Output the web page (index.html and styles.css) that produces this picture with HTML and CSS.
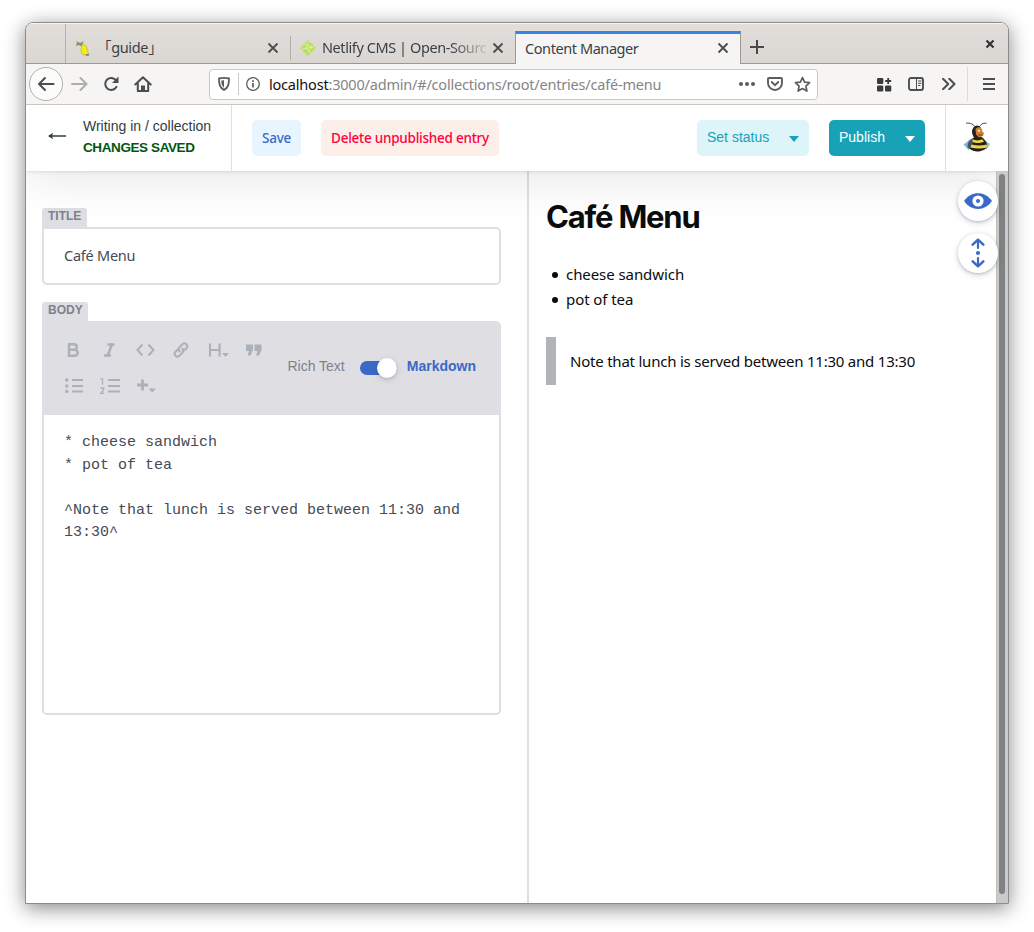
FILE: index.html
```html
<!DOCTYPE html>
<html lang="en">
<head>
<meta charset="utf-8">
<title>Content Manager</title>
<link rel="stylesheet" href="styles.css">
</head>
<body>
<div class="window">
  <header class="tabstrip">
    <div class="tab-lead"></div>
    <div class="tab tab-guide">
      <svg class="favicon" width="16" height="18" viewBox="0 0 16 18"><path d="M1 2l4 2 4-2-2 4 1 2-4-2-3 1 1-3z" fill="#7b9467"/><path d="M7 6c3-1 5 1 5 4 0 2 1 3 2 5l-1 1c-4 1-7-1-7-5 0-2 1-3 1-5z" fill="#f4ee08" stroke="#b9b332" stroke-width=".7"/><path d="M11 15h3v1.500h-3z" fill="#777"/></svg>
      <span class="tab-title guide-title"><span class="bracket-open">「</span>guide<span class="bracket-close">」</span></span>
      <svg class="close" width="12" height="12" viewBox="0 0 12 12"><path d="M1.500 1.500l9 9M10.500 1.500l-9 9"/></svg>
    </div>
    <div class="tab tab-netlify">
      <svg class="favicon" width="16" height="16" viewBox="0 0 16 16"><path d="M8 0l8 8-8 8-8-8z" fill="#b9e05a"/><path d="M4 4l8 3-5 6M2 9l12-2M9 1L6 8l5 5" fill="none" stroke="#e0f2b4" stroke-width=".8"/></svg>
      <span class="tab-title fade">Netlify CMS | Open-Sourc</span>
      <svg class="close" width="12" height="12" viewBox="0 0 12 12"><path d="M1.500 1.500l9 9M10.500 1.500l-9 9"/></svg>
    </div>
    <div class="tab tab-active">
      <span class="tab-title">Content Manager</span>
      <svg class="close" width="12" height="12" viewBox="0 0 12 12"><path d="M1.500 1.500l9 9M10.500 1.500l-9 9"/></svg>
    </div>
    <svg class="new-tab" width="14" height="14" viewBox="0 0 14 14"><path d="M7 0v14M0 7h14" stroke="#474a4c" stroke-width="2"/></svg>
    <svg class="window-close" width="10" height="10" viewBox="0 0 10 10"><path d="M1.500 1.500l7 7M8.500 1.500l-7 7" stroke="#2e3436" stroke-width="2.200"/></svg>
  </header>

  <nav class="navbar">
    <span class="back"><svg width="18" height="16" viewBox="0 0 18 16"><path d="M16.500 8H2.500M8 2L2 8l6 6" class="ln"/></svg></span>
    <svg class="forward" width="18" height="16" viewBox="0 0 18 16"><path d="M1 8h14M9.500 2l6 6-6 6" class="ln"/></svg>
    <svg class="reload" width="16" height="16" viewBox="0 0 16 16"><path d="M13.200 4.600A6 6 0 1 0 13.500 10.800" class="ln"/><path d="M15.500 .5v6.500H9z" fill="#4b4e50"/></svg>
    <svg class="home" width="18" height="16" viewBox="0 0 18 16"><path d="M1.300 8.500L9 1.200l7.700 7.300M3.800 7v8h10.400V7" class="ln"/><path d="M7 15v-5.500h4V15z" fill="#4b4e50"/></svg>
    <div class="urlbar">
      <svg class="shield" width="12" height="14" viewBox="0 0 12 14"><path d="M1 1.500c3-.7 7-.7 10 0 0 6-.8 9-5 11.500C1.800 10.500 1 7.500 1 1.500z" fill="none" stroke="#5c5c5c" stroke-width="1.800"/><path d="M6 3.200v7.500C3.500 8.500 3.300 6.500 3.300 3.500z" fill="#5c5c5c"/></svg>
      <span class="url-sep"></span>
      <svg class="info" width="14" height="14" viewBox="0 0 14 14"><circle cx="7" cy="7" r="6.300" fill="none" stroke="#5c5c5c" stroke-width="1.300"/><path d="M7 6v4.500M7 3.200V5" stroke="#5c5c5c" stroke-width="1.700"/></svg>
      <span class="url"><b>localhost</b>:3000/admin/#/collections/root/entries/café-menu</span>
      <svg class="dots" width="16" height="4" viewBox="0 0 16 4"><circle cx="2" cy="2" r="2"/><circle cx="8" cy="2" r="2"/><circle cx="14" cy="2" r="2"/></svg>
      <svg class="pocket" width="16" height="14" viewBox="0 0 16 14"><path d="M2 1h12q1 0 1 1v4a7 7 0 0 1-14 0V2q0-1 1-1z" fill="none" stroke="#5c5c5c" stroke-width="1.900"/><path d="M4.700 5L8 8.200 11.300 5" fill="none" stroke="#5c5c5c" stroke-width="1.900" stroke-linecap="round"/></svg>
      <svg class="star" width="17" height="17" viewBox="0 0 17 17"><path d="M8.500 1.500l2.100 4.600 5 .6-3.700 3.400 1 5-4.400-2.500-4.400 2.500 1-5L1.400 6.700l5-.6z" fill="none" stroke="#5c5c5c" stroke-width="1.700" stroke-linejoin="round"/></svg>
    </div>
    <svg class="grid-icon" width="15" height="15" viewBox="0 0 15 15"><rect y="1" width="6.300" height="6" rx="1.200"/><rect y="8.500" width="6.300" height="6" rx="1.200"/><rect x="8" y="8.500" width="6.300" height="6" rx="1.200"/><path d="M11.200 1v6M8.200 4h6" stroke="#3b3b3b" stroke-width="1.800"/></svg>
    <svg class="reader" width="16" height="14" viewBox="0 0 16 14"><rect x="1" y="1" width="14" height="12" rx="2" fill="none" stroke="#4b4e50" stroke-width="1.900"/><path d="M8.500 1v12" stroke="#4b4e50"/><path d="M10 4h3.500M10 6.300h3.500M10 8.500h2.500" stroke="#4b4e50"/></svg>
    <svg class="overflow" width="14" height="12" viewBox="0 0 14 12"><path d="M1 .7L6.200 6 1 11.300M7.300 .7L12.500 6l-5.200 5.300" class="ln"/></svg>
    <span class="nav-sep"></span>
    <svg class="menu" width="12" height="12" viewBox="0 0 12 12"><path d="M0 1h12M0 6h12M0 11h12" stroke="#4b4e50" stroke-width="1.800"/></svg>
  </nav>

  <div class="appbar">
    <a class="crumb">
      <svg width="18" height="8" viewBox="0 0 18 8"><path d="M18 4H2" stroke="#313d3e" stroke-width="1.400"/><path d="M0 4l5-3.200L4 4l1 3.200z" fill="#313d3e"/></svg>
      <span class="crumb-text"><span class="crumb-title">Writing in / collection</span><span class="saved">CHANGES SAVED</span></span>
    </a>
    <button class="btn save">Save</button>
    <button class="btn delete">Delete unpublished entry</button>
    <button class="btn status"><span>Set status</span><i class="caret"></i></button>
    <button class="btn publish"><span>Publish</span><i class="caret"></i></button>
    <div class="avatar">
      <svg width="28" height="32" viewBox="0 0 28 32">
        <path d="M3 2.200c4.500-.7 8 1.300 9.300 4.300M23.500 2.200c-4-.5-6 1.300-7.500 4.300" fill="none" stroke="#4a483f" stroke-width="1"/>
        <path d="M7 18.500L.5 23.500l5 5.500 4-4zM22 19.500l5 3.500-4 6z" fill="#86b9c6"/>
        <path d="M10 17c3-2 7-2 10 0 3 3 4.500 6 4 9-3 5-13 6-17 2-2-4-1-8 3-11z" fill="#22211f"/>
        <path d="M4.500 26c0-4 2-7.500 5-8.500L10 22l-3.500 6z" fill="#475064"/>
        <path d="M9.500 18.300q5 2.200 9.800 0l1.700 2.400q-6 2.300-11.500.3zM8.500 23.500q8 2 15.300 0l.2 3q-8 2.200-16.500 0z" fill="#efd73b"/>
        <ellipse cx="14" cy="11" rx="5" ry="6.500" fill="#24221f"/>
        <path d="M12.500 8c2-2.500 5-2 6 0l.5 2 2 2-1 3-4 1.500-3-3z" fill="#c88335"/><circle cx="16" cy="9.700" r="1.200" fill="#e8d9b5"/><path d="M15.500 14h4" stroke="#704315"/>
      </svg>
    </div>
  </div>

  <main class="workspace">
    <section class="editor">
      <label class="field-label">TITLE</label>
      <div class="title-input">Café Menu</div>
      <label class="field-label body-label">BODY</label>
      <div class="markdown-field">
        <div class="md-toolbar">
          <div class="md-tools">
            <svg viewBox="0 0 22 20"><path d="M6 4.200h5a2.800 2.800 0 0 1 0 5.600H6zM6 9.800h5.700a3 3 0 0 1 0 6H6z" fill="none" stroke="#abb0b9" stroke-width="2.400"/></svg>
            <svg viewBox="0 0 22 20"><path d="M8.500 4.500h7M5 15.500h7M12.800 4.500l-4 11" fill="none" stroke="#abb0b9" stroke-width="2.500"/></svg>
            <svg viewBox="0 0 22 20"><path d="M7.500 4.500L2.500 10l5 5.500M13.500 4.500l5 5.500-5 5.500" fill="none" stroke="#abb0b9" stroke-width="2"/></svg>
            <svg viewBox="0 0 22 20"><path d="M8.700 11.500c-2-2-1-3.600 0-4.600L11.700 4c2.500-2 6 1.300 4 4l-2 2M11.200 8.500c2 2 1 3.600 0 4.600L8.200 16c-2.500 2-6-1.300-4-4l2-2" fill="none" stroke="#abb0b9" stroke-width="2" stroke-linecap="round"/></svg>
            <svg viewBox="0 0 22 20"><path d="M3 3.500v13M12.600 3.500v13M3 10h10" fill="none" stroke="#abb0b9" stroke-width="2.100"/><path d="M15 13h7l-3.500 4z" fill="#abb0b9"/></svg>
            <svg viewBox="0 0 22 20"><path d="M3 4.500h7v5.500L7.500 15.500H4.500L6 11H3zM11.500 4.500h7v5.500L16 15.500H13L14.500 11h-3z" fill="#abb0b9"/></svg>
            <svg viewBox="0 0 22 20"><path d="M9 4h11M9 10h11M9 15.500h11" stroke="#abb0b9" stroke-width="2"/><circle cx="3.800" cy="4" r="1.700" fill="#abb0b9"/><circle cx="3.800" cy="10" r="1.700" fill="#abb0b9"/><circle cx="3.800" cy="15.500" r="1.700" fill="#abb0b9"/></svg>
            <svg viewBox="0 0 22 20"><path d="M9 4h12M9 10h12M9 15.500h12" stroke="#abb0b9" stroke-width="2"/><path d="M1.500 2.700h2V8.500M1.500 12h3.200v1.700L1.800 17.300h3.400" fill="none" stroke="#abb0b9" stroke-width="1.300"/></svg>
            <svg viewBox="0 0 22 20"><path d="M7.500 3.500v11M2 9h11" stroke="#abb0b9" stroke-width="2.800"/><path d="M13.500 12.500h7.500l-3.700 4z" fill="#abb0b9"/></svg>
          </div>
          <div class="mode">
            <span class="mode-rich">Rich Text</span>
            <span class="toggle"><span class="knob"></span></span>
            <span class="mode-md">Markdown</span>
          </div>
        </div>
        <pre class="md-source">* cheese sandwich
* pot of tea

^Note that lunch is served between 11:30 and
13:30^</pre>
      </div>
    </section>
    <section class="preview">
      <h1>Café Menu</h1>
      <ul>
        <li><span>cheese sandwich</span></li>
        <li><span>pot of tea</span></li>
      </ul>
      <blockquote>Note that lunch is served between 11:30 and 13:30</blockquote>
    </section>
    <div class="scrollbar"><div class="thumb"></div></div>
    <div class="floaters">
      <span class="round"><svg width="28" height="18" viewBox="0 0 28 18"><path d="M0 9C7-1.500 21-1.500 28 9 21 19.500 7 19.500 0 9z" fill="#3a69c7"/><circle cx="14" cy="9" r="5.600" fill="#fff"/><circle cx="14" cy="9" r="2" fill="#3a69c7"/></svg></span>
      <span class="round"><svg width="14" height="30" viewBox="0 0 14 30"><path d="M7 10.700V2.500M7 19.300v8.200" stroke="#3a69c7" stroke-width="2.200"/><path d="M1.700 6.700L7 1.700l5.300 5M1.700 23.300L7 28.300l5.300-5" fill="none" stroke="#3a69c7" stroke-width="2.500" stroke-linecap="round" stroke-linejoin="round"/><circle cx="7" cy="15" r="2.100" fill="#3a69c7"/></svg></span>
    </div>
  </main>
</div>
</body>
</html>
```
FILE: styles.css
```css
* { box-sizing: border-box; }
body {
  margin: 0;
  padding: 22px 0 0 25px;
  height: 932px;
  background: #fff;
  overflow: hidden;
  font-family: "Noto Sans", "Noto Sans CJK JP", sans-serif;
}
svg { display: block; flex: none; }
.window {
  width: 984px;
  height: 882px;
  border: 1px solid #8b8b88;
  border-radius: 8px 8px 0 0;
  overflow: hidden;
  box-shadow: 0 4px 20px rgba(0, 0, 0, .48);
  display: flex;
  flex-direction: column;
}

/* Tabs */
.tabstrip {
  height: 41px;
  flex: none;
  display: flex;
  position: relative;
  z-index: 2;
  background: linear-gradient(#e1dedb, #dad6d2);
  border-bottom: 1px solid #9a9996;
  border-top: 1px solid #f6f5f4;
  color: #3a4144;
  font-size: 14.500px;
}
.tab-lead { width: 40px; border-right: 1px solid #b5b2ae; }
.tab { display: flex; align-items: center; padding-top: 9px; height: 40px; position: relative; }
.tab-title { white-space: nowrap; line-height: 20px; letter-spacing: -.42px; padding-bottom: 4px; }
.close { width: 12px; margin-left: auto; margin-bottom: 2px; }
.close path { stroke: #4b4e50; stroke-width: 1.900; }
.favicon { margin-bottom: 1px; }
.tab-guide { width: 225px; padding-left: 9px; padding-right: 12px; }
.guide-title { margin-left: 7px; letter-spacing: -.35px; }
.bracket-open, .bracket-close { font-family: "Noto Sans CJK JP", sans-serif; }
.bracket-open { margin-left: -1px; }
.tab-netlify { width: 224px; padding-left: 9px; padding-right: 11px; }
.tab-netlify::before { content: ""; position: absolute; left: -1px; top: 12px; width: 1px; height: 24px; background: #b0adaa; }
.fade {
  margin-left: 6px;
  -webkit-mask-image: linear-gradient(90deg, #000 78%, rgba(0, 0, 0, .15));
  mask-image: linear-gradient(90deg, #000 78%, rgba(0, 0, 0, .15));
}
.tab-active {
  width: 226px;
  height: 34px;
  margin: 7px 0 -1px;
  padding: 0 11px 1px 9px;
  border: 1px solid #9a9996;
  border-top: 3px solid #3584e4;
  border-bottom: 0;
  background: #f6f5f4;
}
.tab-active .tab-title { padding-bottom: 2px; }
.new-tab { margin: 16px 0 0 9px; }
.window-close { margin: 15px 13px 0 auto; }

/* Toolbar */
.navbar {
  height: 41px;
  flex: none;
  display: flex;
  align-items: center;
  position: relative;
  z-index: 2;
  padding-left: 3px;
  background: #f6f5f4;
  border-bottom: 1px solid #cdc7c2;
}
.ln { fill: none; stroke: #4b4e50; stroke-width: 2; stroke-linecap: round; stroke-linejoin: round; }
.back {
  width: 34px;
  height: 34px;
  border: 1px solid #b2b1af;
  border-radius: 50%;
  background: #fcfcfb;
  display: flex;
  align-items: center;
  justify-content: center;
}
.forward { margin-left: 8px; opacity: .42; }
.reload { margin-left: 14px; }
.home { margin-left: 15px; }
.urlbar {
  width: 609px;
  height: 31px;
  margin-left: 57px;
  border: 1px solid #cdc7c2;
  border-radius: 4px;
  background: #fff;
  display: flex;
  align-items: center;
  padding: 0 6px 0 8px;
}
.url-sep { width: 1px; height: 22px; background: #cdc7c2; margin: 0 7px 0 8px; }
.url { margin-left: 9px; font-size: 14.500px; letter-spacing: -.2px; color: #858585; white-space: nowrap; }
.url b { font-weight: 400; color: #111; }
.dots { margin-left: auto; fill: #5c5c5c; }
.pocket { margin-left: 12px; }
.star { margin-left: 11px; }
.grid-icon { margin-left: 59px; fill: #3b3b3b; }
.reader { margin-left: 16px; }
.overflow { margin-left: 18px; }
.nav-sep { width: 1px; height: 34px; background: #dcd9d6; margin-left: 11px; }
.menu { margin-left: 15px; }

/* App header */
.appbar {
  height: 66px;
  flex: none;
  display: flex;
  align-items: flex-start;
  background: #fff;
  box-shadow: 0 1px 3px rgba(68, 74, 87, .15), 0 2px 54px rgba(0, 0, 0, .12);
  position: relative;
  z-index: 1;
}
.crumb {
  width: 206px;
  height: 66px;
  border-right: 1px solid #dfdfe3;
  display: flex;
  padding-left: 22px;
  color: #313d3e;
}
.crumb > svg { margin-top: 27px; }
.crumb-text {
  margin: 11px 0 0 17px;
  display: flex;
  flex-direction: column;
  font: 14px/21px "Liberation Sans", sans-serif;
  white-space: nowrap;
}
.saved { color: #005614; font-weight: 700; font-size: 13.500px; letter-spacing: -.4px; }
.btn {
  height: 36px;
  margin: 15px 0 0 20px;
  padding: 0;
  border: 0;
  border-radius: 5px;
  font: 500 13.500px "Noto Sans", sans-serif;
  letter-spacing: -.24px;
  white-space: nowrap;
}
.save { width: 49px; background: #e8f5fe; color: #3a69c7; }
.delete { width: 178px; background: #fceee9; color: #ff003b; }
.status, .publish {
  display: flex;
  justify-content: space-between;
  align-items: center;
  padding: 0 10px;
  font: 14px "Liberation Sans", sans-serif;
  letter-spacing: 0;
}
.status span, .publish span { padding-bottom: 2px; }
.status { width: 112px; margin-left: 198px; background: #ddf5f9; color: #17a2b8; }
.publish { width: 96px; background: #17a2b8; color: #fff; }
.caret { border: 5px solid transparent; border-top: 6px solid; border-bottom: 0; margin-top: 1px; }
.avatar { margin-left: 20px; height: 66px; border-left: 1px solid #dfdfe3; padding: 16px 0 0 17px; }

/* Workspace */
.workspace { flex: 1; display: flex; position: relative; background: #fff; min-height: 0; }
.editor { width: 503px; border-right: 2px solid #dfdfe3; padding: 37px 26px 0 16px; }
.field-label {
  display: block;
  width: 45px;
  height: 19px;
  padding-left: 6px;
  border-radius: 3px 3px 0 0;
  background: #dfdfe3;
  color: #7a8291;
  font: 700 12px/16px "Liberation Sans", sans-serif;
}
.body-label { width: 46px; margin-top: 17px; }
.title-input {
  width: 459px;
  height: 58px;
  border: 2px solid #dfdfe3;
  border-radius: 0 5px 5px 5px;
  padding-left: 20px;
  font-size: 14.500px;
  letter-spacing: -.25px;
  line-height: 52px;
  color: #444a57;
}
.markdown-field {
  width: 459px;
  height: 394px;
  border: 2px solid #dfdfe3;
  border-radius: 0 5px 5px 5px;
}
.md-toolbar { height: 92px; background: #dfdfe3; display: flex; padding: 17px 23px 0 19px; }
.md-tools { display: grid; grid-template-columns: repeat(6, 22px); grid-auto-rows: 20px; gap: 16px 14px; align-content: start; }
.md-tools svg { width: 22px; height: 20px; }
.mode { margin: 16px 0 0 auto; display: flex; height: 20px; font: 14px/20px "Liberation Sans", sans-serif; }
.mode-rich { color: #7a8291; white-space: nowrap; }
.toggle { width: 37px; height: 14px; border-radius: 8px; background: #3a69c7; margin: 5px 10px 0 15px; }
.knob { display: block; width: 20px; height: 20px; margin: -3px 0 0 17px; border-radius: 50%; background: #fff; box-shadow: 0 2px 6px rgba(68, 74, 87, .2), 0 1px 3px rgba(68, 74, 87, .15); }
.mode-md { color: #3a69c7; font-weight: 700; }
.md-source { margin: 17px 20px 0; font: 15px/22.500px "Liberation Mono", monospace; color: #444a57; }
.preview { width: 467px; padding-left: 17px; color: #0b0c0c; font-size: 15px; }
.preview h1 { margin: 24px 0 0; font: 700 31px/44px Inter, sans-serif; letter-spacing: -1.2px; white-space: nowrap; }
.preview ul { list-style: none; margin: 23px 0 0; padding: 0; letter-spacing: -.07px; }
.preview li { height: 25px; line-height: 25px; display: flex; align-items: center; }
.preview li::before { content: ""; width: 6px; height: 6px; border-radius: 50%; background: #0b0c0c; margin: 0 8px 0 6px; }
.preview blockquote { margin: 25px 0 0; border-left: 10px solid #b1b4b6; height: 48px; padding-left: 14px; line-height: 49px; white-space: nowrap; letter-spacing: -.22px; }
.scrollbar { width: 12px; background: #cacaca; border-left: 1px solid #c0bdb4; padding: 3px 0 0 2px; position: relative; z-index: 2; }
.thumb { width: 6px; height: 720px; border-radius: 3px; background: #7e8282; }
.floaters { position: absolute; left: 932px; top: 10px; display: flex; flex-direction: column; gap: 12px; z-index: 3; }
.round { width: 40px; height: 40px; border-radius: 50%; background: #fff; display: flex; align-items: center; justify-content: center; box-shadow: 0 2px 6px rgba(68, 74, 87, .2), 0 1px 3px rgba(68, 74, 87, .25); }
```
